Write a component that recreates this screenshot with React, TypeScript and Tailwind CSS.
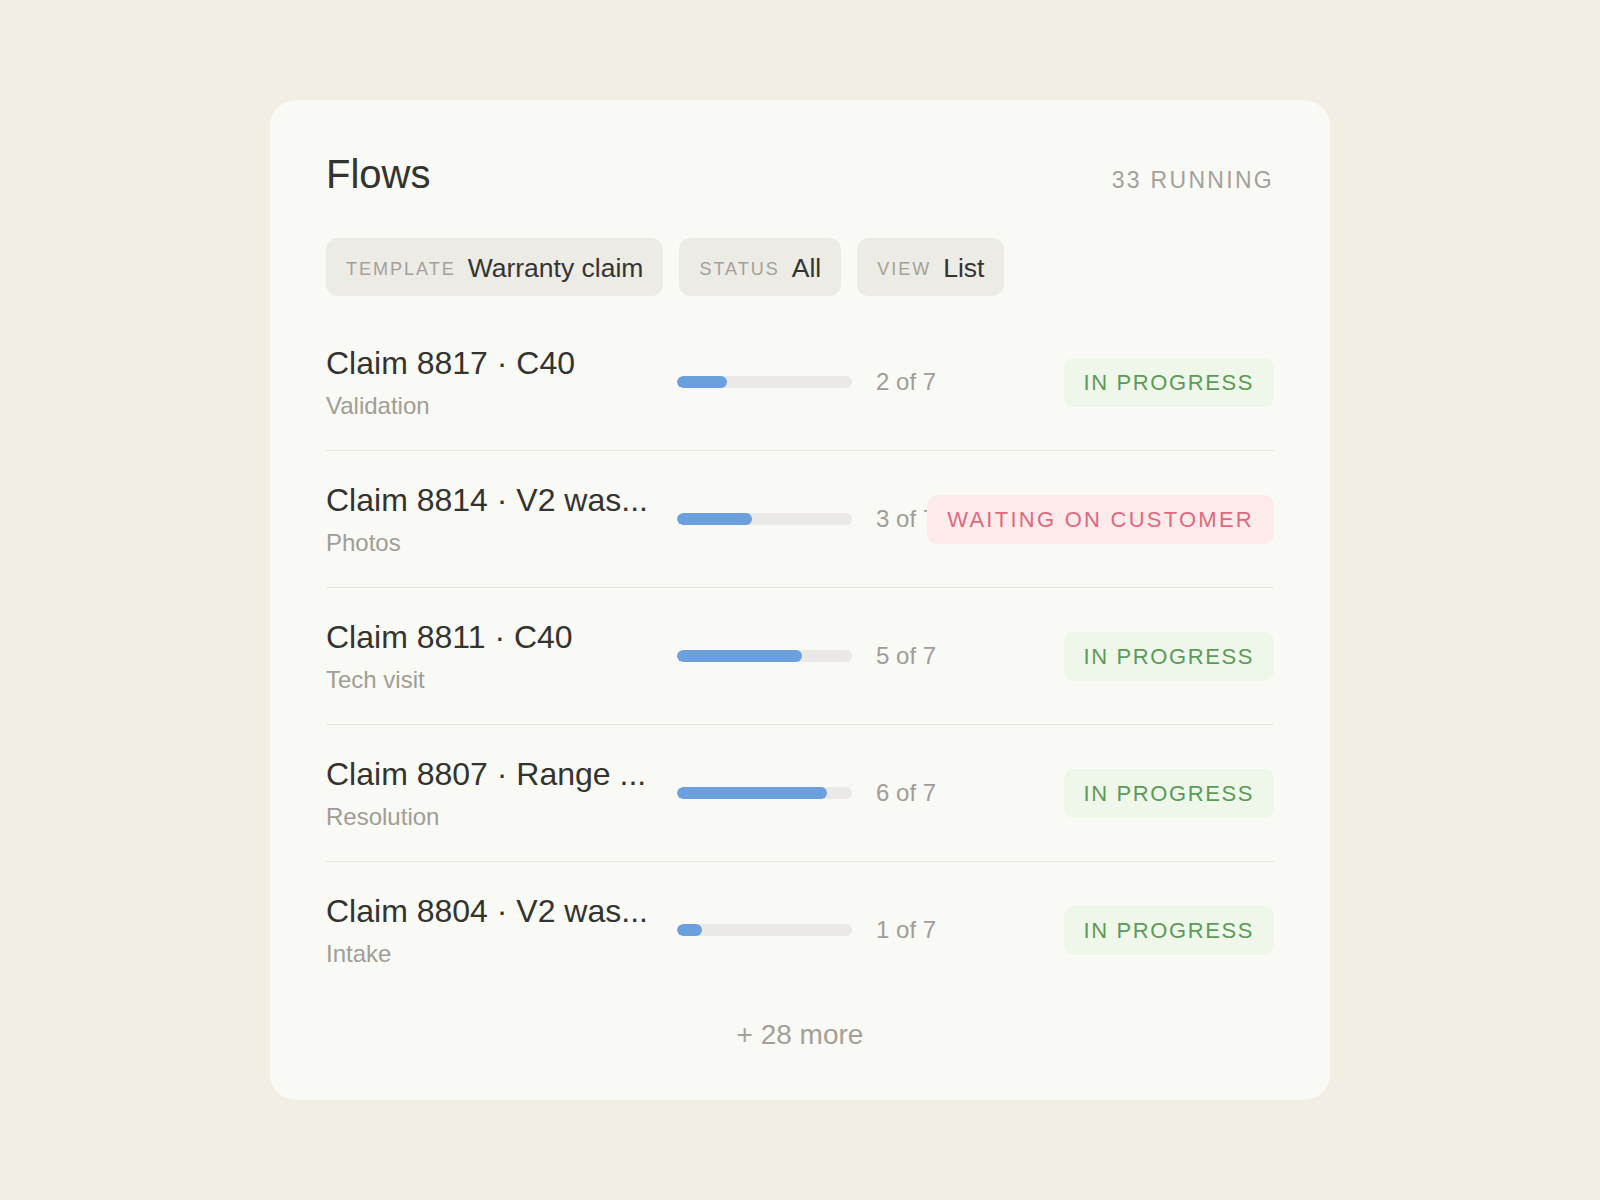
import React from "react";

type Row = {
  title: string;
  step: string;
  done: number;
  total: number;
  status: "progress" | "waiting";
};

const rows: Row[] = [
  { title: "Claim 8817 · C40", step: "Validation", done: 2, total: 7, status: "progress" },
  { title: "Claim 8814 · V2 was...", step: "Photos", done: 3, total: 7, status: "waiting" },
  { title: "Claim 8811 · C40", step: "Tech visit", done: 5, total: 7, status: "progress" },
  { title: "Claim 8807 · Range ...", step: "Resolution", done: 6, total: 7, status: "progress" },
  { title: "Claim 8804 · V2 was...", step: "Intake", done: 1, total: 7, status: "progress" },
];

function Pill({ label, value }: { label: string; value: string }) {
  return (
    <div className="flex h-[58px] items-center rounded-[12px] bg-[#ecebe6] px-5 pt-1">
      <div className="flex items-center gap-3">
        <span className="text-[18px] uppercase tracking-[2px] text-[#a4a19a]">{label}</span>
        <span className="text-[26.5px] leading-[1.2] text-[#343431]">{value}</span>
      </div>
    </div>
  );
}

function Badge({ status }: { status: Row["status"] }) {
  if (status === "waiting") {
    return (
      <div className="flex h-[49px] shrink-0 items-center rounded-[10px] bg-[#fdebeb] px-5 text-[22px] tracking-[2.25px] text-[#e1687d]">
        WAITING ON CUSTOMER
      </div>
    );
  }
  return (
    <div className="flex h-[49px] shrink-0 items-center rounded-[10px] bg-[#eef7ea] px-5 text-[22px] tracking-[1.6px] text-[#5d9a58]">
      IN PROGRESS
    </div>
  );
}

export default function App() {
  return (
    <div
      className="flex min-h-screen items-center justify-center bg-[#f2eee3]"
      style={{ fontFamily: '"Liberation Sans", Arial, sans-serif' }}
    >
      <div className="w-[1060px] rounded-[26px] bg-[#f9f9f5] px-14 pb-[48px] pt-[50px]">
        <div className="flex items-baseline justify-between">
          <h1 className="text-[40px] font-normal leading-[1.2] text-[#333330]">Flows</h1>
          <span className="text-[23px] tracking-[0.1em] text-[#a3a19b]">33 RUNNING</span>
        </div>

        <div className="mt-10 flex gap-4">
          <Pill label="Template" value="Warranty claim" />
          <Pill label="Status" value="All" />
          <Pill label="View" value="List" />
        </div>

        <div className="mt-[18px]">
          {rows.map((r, i) => (
            <div
              key={i}
              className={
                i < rows.length - 1
                  ? "flex items-center border-b border-[#e6e4df] py-[29.4px]"
                  : "flex items-center py-[29.4px]"
              }
            >
              <div className="w-[320px] shrink-0 whitespace-nowrap">
                <div className="text-[32px] leading-[1.2] text-[#333330]">{r.title}</div>
                <div className="mt-[10px] text-[24px] leading-[1.2] text-[#a09d97]">{r.step}</div>
              </div>
              <div className="ml-[31px] h-3 w-[175px] shrink-0 overflow-hidden rounded-full bg-[#ebe9e5]">
                <div
                  className="h-full rounded-full bg-[#6ca0dd]"
                  style={{ width: `${(r.done / r.total) * 100}%` }}
                />
              </div>
              <div className="ml-6 min-w-0 flex-1 whitespace-nowrap text-[24px] text-[#a09d97]">
                {r.done} of {r.total}
              </div>
              <Badge status={r.status} />
            </div>
          ))}
        </div>

        <div className="mt-5 text-center text-[28px] leading-[1.2] text-[#a3a09a]">+ 28 more</div>
      </div>
    </div>
  );
}
